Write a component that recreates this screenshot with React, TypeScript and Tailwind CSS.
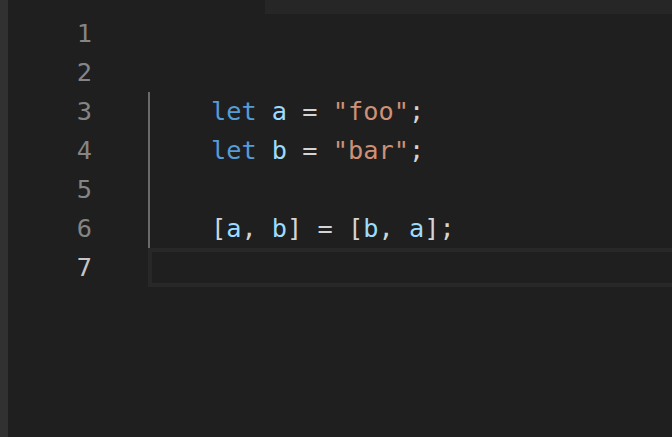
import React from 'react';

type Tok = { t: string; c: string };

const KW = 'text-[#569cd6]';
const VAR = 'text-[#9cdcfe]';
const STR = 'text-[#ce9178]';
const PUN = 'text-[#d4d4d4]';

const lines: Tok[][] = [
  [],
  [],
  [
    { t: '    ', c: PUN },
    { t: 'let', c: KW },
    { t: ' ', c: PUN },
    { t: 'a', c: VAR },
    { t: ' = ', c: PUN },
    { t: '"foo"', c: STR },
    { t: ';', c: PUN },
  ],
  [
    { t: '    ', c: PUN },
    { t: 'let', c: KW },
    { t: ' ', c: PUN },
    { t: 'b', c: VAR },
    { t: ' = ', c: PUN },
    { t: '"bar"', c: STR },
    { t: ';', c: PUN },
  ],
  [],
  [
    { t: '    [', c: PUN },
    { t: 'a', c: VAR },
    { t: ', ', c: PUN },
    { t: 'b', c: VAR },
    { t: '] = [', c: PUN },
    { t: 'b', c: VAR },
    { t: ', ', c: PUN },
    { t: 'a', c: VAR },
    { t: '];', c: PUN },
  ],
  [],
];

const App: React.FC = () => {
  return (
    <div
      className="w-[672px] h-[437px] bg-[#1f1f1f] flex overflow-hidden text-[25.3px]"
      style={{ fontFamily: '"DejaVu Sans Mono", "Liberation Mono", monospace' }}
    >
      <div className="w-[8px] shrink-0 bg-[#313131]" />
      <div className="flex-1 flex flex-col">
        <div className="h-[14px] flex">
          <div className="w-[257px]" />
          <div className="flex-1 bg-[#262626]" />
        </div>
        {lines.map((toks, i) => {
          const n = i + 1;
          const active = n === 7;
          const guide = n >= 3 && n <= 6;
          return (
            <div key={n} className="h-[39px] flex items-center">
              <div
                className={`w-[84px] text-right leading-[39px] ${
                  active ? 'text-[#c6c6c6]' : 'text-[#858585]'
                }`}
              >
                {n}
              </div>
              <div
                className={`ml-[56px] flex-1 h-full whitespace-pre leading-[39px] ${
                  active
                    ? 'border-l-4 border-t-4 border-b-4 border-[#282828] leading-[31px]'
                    : guide
                    ? 'border-l-2 border-[#6a6a6a]'
                    : ''
                }`}
              >
                {toks.map((tk, j) => (
                  <span key={j} className={tk.c}>
                    {tk.t}
                  </span>
                ))}
              </div>
            </div>
          );
        })}
      </div>
    </div>
  );
};

export default App;
